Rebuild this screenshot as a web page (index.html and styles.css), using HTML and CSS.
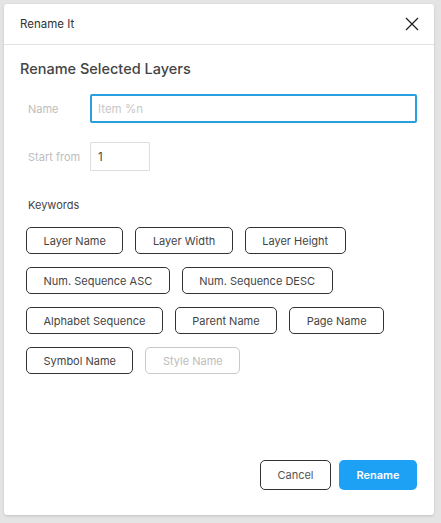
FILE: index.html
```html
<!DOCTYPE html>
<html>
<head>
<meta charset="utf-8">
<link rel="stylesheet" href="styles.css">
</head>
<body>
<div class="dialog">
  <div class="header">
    <span class="title">Rename It</span>
    <svg class="close" width="14" height="14" viewBox="0 0 14 14"><path d="M1 1L13 13M13 1L1 13" stroke="#222" stroke-width="1.3" fill="none"/></svg>
  </div>
  <div class="content">
    <h1 class="heading">Rename Selected Layers</h1>
    <div class="row row-name">
      <label class="label">Name</label>
      <div class="input input-name"><span class="placeholder">Item %n</span></div>
    </div>
    <div class="row row-start">
      <label class="label">Start from</label>
      <div class="input input-start">1</div>
    </div>
    <div class="keywords-label">Keywords</div>
    <div class="chips">
      <div class="chip-row">
        <span class="chip">Layer Name</span>
        <span class="chip">Layer Width</span>
        <span class="chip">Layer Height</span>
      </div>
      <div class="chip-row">
        <span class="chip">Num. Sequence ASC</span>
        <span class="chip">Num. Sequence DESC</span>
      </div>
      <div class="chip-row">
        <span class="chip">Alphabet Sequence</span>
        <span class="chip">Parent Name</span>
        <span class="chip">Page Name</span>
      </div>
      <div class="chip-row">
        <span class="chip">Symbol Name</span>
        <span class="chip chip-disabled">Style Name</span>
      </div>
    </div>
    <div class="footer">
      <button class="btn btn-cancel">Cancel</button>
      <button class="btn btn-primary">Rename</button>
    </div>
  </div>
</div>
</body>
</html>
```
FILE: styles.css
```css
* { box-sizing: border-box; }
html, body { margin: 0; padding: 0; }
body {
  background: #e4e4e4;
  font-family: Inter, "Noto Sans", sans-serif;
  width: 441px;
  height: 523px;
  padding: 4px 0 0 4px;
  overflow: hidden;
}
.dialog {
  width: 430px;
  height: 511px;
  background: #fff;
  border-radius: 3px;
  box-shadow: 0 1px 3px rgba(0,0,0,0.15);
  display: flex;
  flex-direction: column;
}
.header {
  height: 41px;
  border-bottom: 1px solid #e2e2e2;
  display: flex;
  align-items: center;
  justify-content: space-between;
  padding: 0 15px 0 16px;
  flex: none;
}
.title {
  font-size: 11.5px;
  color: #333;
}
.close { display: block; }
.content {
  flex: 1;
  display: flex;
  flex-direction: column;
  padding: 0 17px 0 16px;
}
.heading {
  margin: 14px 0 0 0;
  font-size: 14.5px;
  line-height: 20px;
  font-weight: 500;
  color: #444;
}
.row {
  display: flex;
  align-items: center;
  margin-left: 8px;
}
.row-name { margin-top: 15px; }
.row-start { margin-top: 19px; }
.label {
  width: 62px;
  font-size: 11px;
  color: #bdbdbd;
  flex: none;
}
.input {
  height: 29px;
  font-size: 11.5px;
  display: flex;
  align-items: center;
  padding-left: 7px;
  color: #444;
}
.input-name {
  flex: 1;
  border: 2px solid #2a9fe0;
  border-radius: 2px;
  padding-left: 6px;
}
.placeholder { color: #c8c8c8; }
.input-start {
  width: 60px;
  border: 1px solid #dedede;
  border-radius: 1px;
}
.keywords-label {
  margin: 27px 0 0 8px;
  font-size: 11px;
  color: #444;
  line-height: 14px;
}
.chips {
  margin: 15px 0 0 6px;
  display: flex;
  flex-direction: column;
  gap: 13px;
}
.chip-row {
  display: flex;
  gap: 12px;
}
.chip {
  height: 27px;
  padding: 0 16.5px;
  border: 1px solid #333;
  border-radius: 5px;
  font-size: 11px;
  color: #444;
  display: flex;
  align-items: center;
}
.chip-disabled {
  border-color: #c9c9c9;
  color: #bcbcbc;
}
.footer {
  margin-top: auto;
  margin-bottom: 25px;
  display: flex;
  justify-content: flex-end;
  gap: 8px;
}
.btn {
  height: 30px;
  border-radius: 5px;
  font-family: Inter, "Noto Sans", sans-serif;
  font-size: 11px;
  padding: 0;
}
.btn-cancel {
  width: 71px;
  background: #fff;
  border: 1px solid #333;
  color: #555;
}
.btn-primary {
  width: 78px;
  background: #1ca1f5;
  border: none;
  color: #fff;
  font-weight: 600;
}
```
